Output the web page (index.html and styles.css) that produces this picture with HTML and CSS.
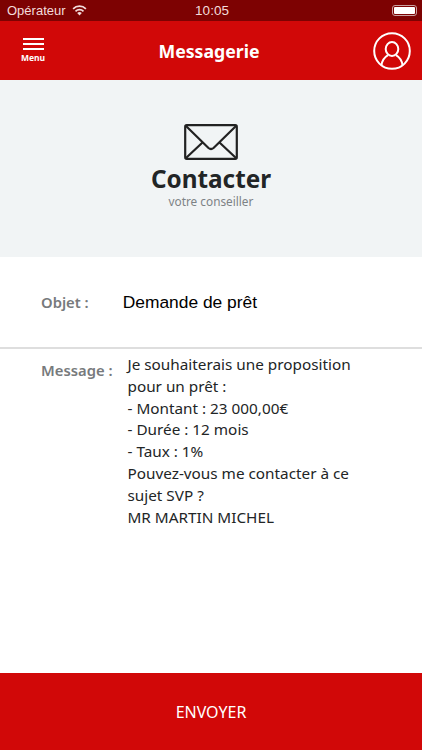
FILE: index.html
```html
<!DOCTYPE html>
<html lang="fr">
<head>
    <meta charset="UTF-8">
    <meta name="viewport" content="width=device-width, initial-scale=1.0">
    <title>Messagerie</title>
    <link rel="stylesheet" href="styles.css">
</head>
<body>
<div class="app">
    <div class="status-bar">
        <div class="status-left">
            <span>Opérateur</span>
            <svg class="wifi" width="15" height="11" viewBox="0 0 15 11">
                <path d="M7.5 10.6 L5.2 8.1 A3.3 3.3 0 0 1 9.8 8.1 Z" fill="#f3dcdc"/>
                <path d="M3.5 6.3 A5.8 5.8 0 0 1 11.5 6.3" fill="none" stroke="#f3dcdc" stroke-width="1.7"/>
                <path d="M1.1 3.8 A9.2 9.2 0 0 1 13.9 3.8" fill="none" stroke="#f3dcdc" stroke-width="1.7"/>
            </svg>
        </div>
        <span class="status-time">10:05</span>
        <div class="status-right">
            <div class="battery"><div class="battery-level"></div></div>
        </div>
    </div>

    <header class="topbar">
        <div class="menu-btn">
            <div class="burger"><i></i><i></i><i></i></div>
            <span>Menu</span>
        </div>
        <h1>Messagerie</h1>
        <svg class="profile" width="38" height="38" viewBox="0 0 38 38" fill="none" stroke="#fff" stroke-width="2">
            <circle cx="19" cy="19" r="17.8"/>
            <ellipse cx="19" cy="17" rx="6.3" ry="7"/>
            <path d="M8.5 33.5 C9 28 12 25 15 23.2 M29.5 33.5 C29 28 26 25 23 23.2"/>
        </svg>
    </header>

    <section class="hero">
        <svg class="envelope" width="54" height="36" viewBox="0 0 54 36" fill="none" stroke="#222" stroke-width="2.2" stroke-linejoin="round">
            <rect x="1.2" y="1.2" width="51.6" height="33.6" rx="1.5"/>
            <path d="M2 2 L24.5 24 Q27 26 29.5 24 L52 2"/>
            <path d="M2 34 L18.5 18.5 M52 34 L35.5 18.5"/>
        </svg>
        <h2>Contacter</h2>
        <p>votre conseiller</p>
    </section>

    <section class="row-objet">
        <span class="field-label">Objet :</span>
        <span class="objet-value">Demande de prêt</span>
    </section>

    <section class="row-message">
        <span class="field-label">Message :</span>
        <div class="message-text">
            Je souhaiterais une proposition<br>
            pour un prêt :<br>
            - Montant : 23 000,00€<br>
            - Durée : 12 mois<br>
            - Taux : 1%<br>
            Pouvez-vous me contacter à ce<br>
            sujet SVP ?<br>
            MR MARTIN MICHEL
        </div>
    </section>

    <button type="button" class="send-btn">ENVOYER</button>
</div>
</body>
</html>
```

FILE: styles.css
```css
/* Page */
* {
    box-sizing: border-box;
}

body {
    margin: 0;
    font-family: "Noto Sans", "Open Sans", sans-serif;
    background-color: #ffffff;
}

.app {
    display: flex;
    flex-direction: column;
    width: 422px;
    height: 750px;
    overflow: hidden;
}

/* Barre de statut */
.status-bar {
    display: flex;
    align-items: center;
    height: 21px;
    padding: 0 5px 1px 7px;
    background-color: #7d0202;
    color: #f3dcdc;
    font-family: "Liberation Sans", sans-serif;
    font-size: 13px;
}

.status-left {
    flex: 1;
    display: flex;
    align-items: center;
    gap: 6px;
}

.status-right {
    flex: 1;
    display: flex;
    justify-content: flex-end;
}

.status-time {
    font-size: 13.5px;
}

.battery {
    width: 25px;
    height: 11px;
    padding: 1px;
    border: 1px solid #c9a0a0;
    border-radius: 3px;
}

.battery-level {
    height: 100%;
    background-color: #ffffff;
    border-radius: 1px;
}

/* Entete */
.topbar {
    display: flex;
    align-items: center;
    justify-content: space-between;
    height: 59px;
    padding: 0 11px 0 21px;
    background-color: #d10808;
    color: #ffffff;
}

.topbar h1 {
    margin: 0;
    font-size: 17.7px;
    font-weight: 700;
}

.menu-btn {
    display: flex;
    flex-direction: column;
    align-items: center;
    width: 24px;
    font-size: 8.5px;
    font-weight: 700;
    line-height: 10px;
}

.burger {
    display: flex;
    flex-direction: column;
    gap: 3px;
    width: 21px;
    margin-bottom: 3px;
}

.burger i {
    display: block;
    height: 2px;
    background-color: #ffffff;
}

/* Bandeau */
.hero {
    display: flex;
    flex-direction: column;
    align-items: center;
    height: 177px;
    padding-top: 44px;
    background-color: #f1f4f5;
}

.hero h2 {
    margin: 5px 0 0;
    font-size: 24.3px;
    font-weight: 700;
    line-height: 28px;
    color: #222526;
}

.hero p {
    margin: 2px 0 0;
    font-size: 11.8px;
    line-height: 13px;
    color: #7d8285;
}

/* Formulaire */
.field-label {
    font-size: 14.8px;
    font-weight: 600;
    color: #777a7c;
}

.row-objet {
    display: flex;
    align-items: flex-start;
    gap: 34px;
    height: 92px;
    padding: 33px 0 0 41px;
    border-bottom: 2px solid #dedede;
}

.row-objet .field-label {
    margin-top: 2px;
}

.objet-value {
    font-family: "Liberation Sans", sans-serif;
    font-size: 17.4px;
    line-height: 24px;
    color: #000000;
}

.row-message {
    flex: 1;
    display: flex;
    align-items: flex-start;
    gap: 15px;
    padding: 5px 0 0 41px;
}

.row-message .field-label {
    margin-top: 6px;
}

.message-text {
    font-size: 15.3px;
    line-height: 21.8px;
    color: #222526;
}

/* Bouton */
.send-btn {
    height: 77px;
    border: none;
    background-color: #d10808;
    color: #ffffff;
    font-family: inherit;
    font-size: 16px;
    cursor: pointer;
}
```
